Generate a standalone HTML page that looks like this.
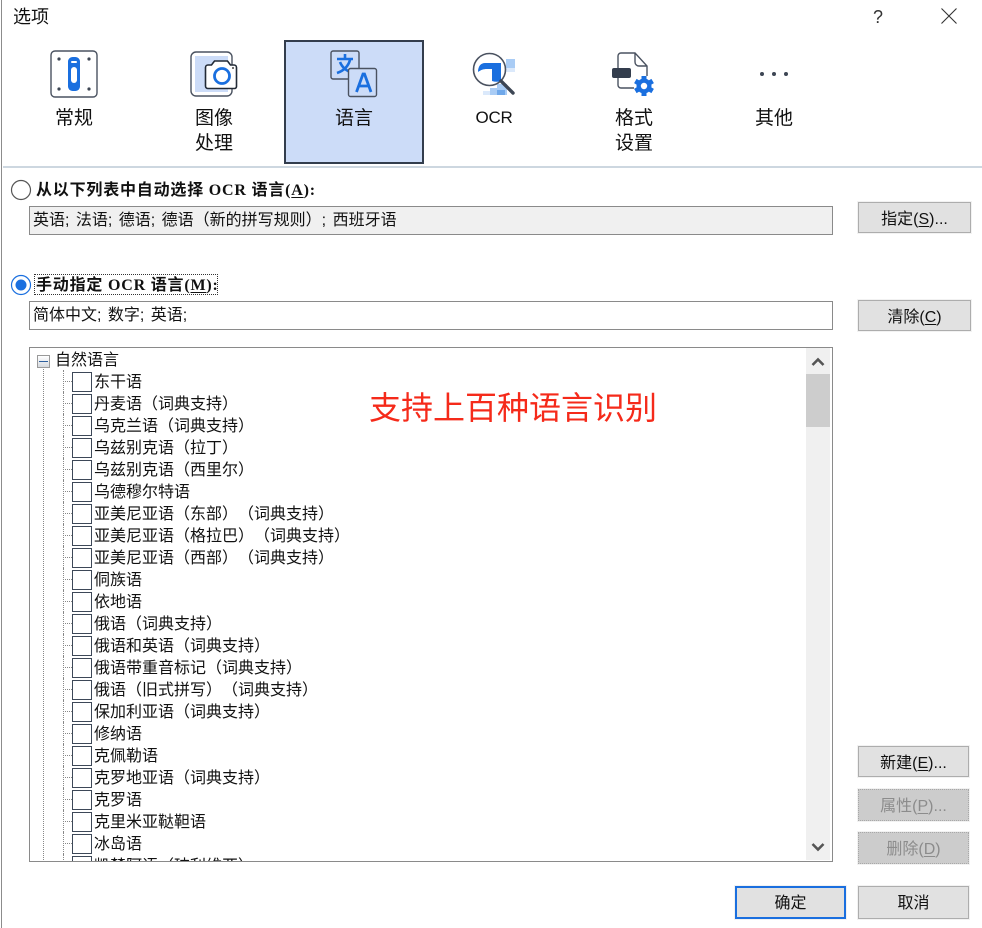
<!DOCTYPE html>
<html lang="zh-CN">
<head>
<meta charset="utf-8">
<title>选项</title>
<style>
html,body{margin:0;padding:0;background:#fff}
body{position:relative;width:982px;height:928px;overflow:hidden;font-family:"Liberation Sans","Noto Sans CJK SC",sans-serif;color:#111;text-spacing-trim:space-all;font-kerning:none}
.a{position:absolute}
.tx{position:absolute;white-space:nowrap;line-height:26px}
.tab{position:absolute;text-align:center;font-size:19px;line-height:25px;width:140px;top:106px}
.box{position:absolute;left:29px;width:799px;border:1px solid #8a8a8a;font-size:16px;font-family:"Liberation Sans","WenQuanYi Zen Hei","Noto Sans CJK SC",sans-serif;line-height:28px;padding-left:3px;box-sizing:content-box;white-space:nowrap;word-spacing:2px}
.btn{position:absolute;box-sizing:border-box;background:#e1e1e1;border:1px solid #adadad;outline:1px solid #f2f2f2;text-align:center;font-size:16px;line-height:33px}
.btn.dis{background:#cccccc;border:1px dotted #a8a8a8;color:#8c8c8c}
.lbl{font-size:16px;font-weight:bold;font-family:'Liberation Serif','Noto Sans CJK SC',sans-serif;letter-spacing:.8px}
u{text-underline-offset:2px}
#tree{position:absolute;left:29px;top:347px;width:804px;height:515px;box-sizing:border-box;border:1px solid #8a8a8a;overflow:hidden;background:#fff}
#rows{position:absolute;left:0;top:2px;width:776px;font-family:"Liberation Sans","WenQuanYi Zen Hei","Noto Sans CJK SC",sans-serif;font-size:16px}
.r{position:relative;height:22px;line-height:22px;padding-left:64px;white-space:nowrap}
.r i{position:absolute;left:42px;top:0;width:20px;height:20px;box-sizing:border-box;border:1px solid #3d4858;background:#fff}
.r b{position:absolute;left:33px;top:9px;width:9px;border-top:1px dotted #888}
.r s{position:absolute;left:33px;top:-2px;height:22px;border-left:1px dotted #888}
</style>
</head>
<body>
<div class="a" style="left:1px;top:0;width:1px;height:928px;background:#8c8c8c"></div>
<div class="tx" style="left:13px;top:4px;font-size:18px">选项</div>
<div class="tx" style="left:873px;top:4px;font-size:18px;color:#333">?</div>
<svg class="a" style="left:940px;top:7px" width="18" height="18" viewBox="0 0 18 18"><path d="M1.500 1.500L16.500 16.500M16.500 1.500L1.500 16.500" stroke="#333" stroke-width="1.100" fill="none"/></svg>

<div class="a" style="left:284px;top:40px;width:140px;height:124px;box-sizing:border-box;background:#ccdcf8;border:2px solid #333d4d"></div>
<div class="a" style="left:3px;top:166px;width:979px;height:2px;background:#cdd7e0"></div>

<svg class="a" style="left:50px;top:50px" width="48" height="48" viewBox="0 0 48 48">
<rect x="1" y="1" width="46" height="46" rx="4" fill="#fff" stroke="#4a5260" stroke-width="1.400"/>
<circle cx="9" cy="9" r="1.600" fill="#3d4654"/><circle cx="39" cy="9" r="1.600" fill="#3d4654"/><circle cx="9" cy="39" r="1.600" fill="#3d4654"/><circle cx="39" cy="39" r="1.600" fill="#3d4654"/>
<rect x="18" y="7" width="12" height="34" rx="4.500" fill="#1a6fdf"/>
<rect x="21" y="11" width="6" height="2" rx="1" fill="#fff"/>
<rect x="21" y="17" width="6" height="16" rx="3" fill="#fff"/>
</svg>

<svg class="a" style="left:189px;top:50px" width="50" height="48" viewBox="0 0 50 48">
<rect x="2" y="2" width="41" height="44" rx="5" fill="#fff" stroke="#4a5260" stroke-width="1.400"/>
<rect x="6" y="6" width="33" height="36" fill="#ccdcf8"/>
<path d="M19 15h3.500l3-4h13l3 4h3.500a2.500 2.500 0 0 1 2.500 2.500v19a2 2 0 0 1-2 2H19a2.500 2.500 0 0 1-2.500-2.500V17.500a2.500 2.500 0 0 1 2.500-2.500z" fill="#fff" stroke="#222a36" stroke-width="1.600"/>
<circle cx="33" cy="26" r="7.500" fill="none" stroke="#1a6fdf" stroke-width="2.800"/>
<circle cx="44" cy="18" r="1" fill="#444"/>
</svg>

<svg class="a" style="left:330px;top:50px" width="48" height="48" viewBox="0 0 48 48">
<rect x="1" y="1" width="28" height="28" rx="2" fill="#ccdcf8" stroke="#4a5260" stroke-width="1.400"/>
<path d="M7 9h16M15 4v5M20 10c-2 7-7 11-13 13M10 12c2 5 6 9 13 11" fill="none" stroke="#1a6fdf" stroke-width="2.600"/>
<rect x="18.500" y="18.500" width="28" height="28" rx="2" fill="#ccdcf8" stroke="#4a5260" stroke-width="1.400"/>
<path d="M26.500 42l6.500-18h1.500l6.500 18M29 36h10" fill="none" stroke="#1a6fdf" stroke-width="2.800"/>
</svg>

<svg class="a" style="left:470px;top:50px" width="48" height="48" viewBox="0 0 48 48">
<g fill="#a9ccf5"><rect x="36" y="9" width="9" height="9"/><rect x="36" y="18" width="9" height="4" fill="#dbe9fb"/><rect x="27" y="34" width="10" height="11"/><rect x="13" y="41" width="7" height="4" fill="#dbe9fb"/><rect x="20" y="38" width="7" height="7" fill="#a9ccf5"/><rect x="27" y="40" width="8" height="5" fill="#6fa8ea"/></g>
<circle cx="19.500" cy="19.500" r="16" fill="#fff" stroke="#4a5260" stroke-width="1.600"/>
<path d="M8 22c0-6 3-9 7-9h16v5h0v13c-3 1-6 1-9 0V19h-5c-4 0-6 1-9 3z" fill="#1a6fdf"/>
<path d="M31 31l12 12" stroke="#3d4654" stroke-width="3.400" stroke-linecap="round"/>
</svg>

<svg class="a" style="left:610px;top:50px" width="48" height="48" viewBox="0 0 48 48">
<path d="M8 18V6a3 3 0 0 1 3-3h14l12 13v10M25 3v9a4 4 0 0 0 4 4h8M8 28v7a3 3 0 0 0 3 3h13" fill="none" stroke="#4a5260" stroke-width="1.400"/>
<rect x="2" y="18" width="19" height="10" rx="2" fill="#333d4d"/>
<g fill="#1a6fdf" transform="translate(34 36)">
<circle r="7.500"/>
<rect x="-2.500" y="-10" width="5" height="20"/>
<rect x="-2.500" y="-10" width="5" height="20" transform="rotate(60)"/>
<rect x="-2.500" y="-10" width="5" height="20" transform="rotate(120)"/>
</g>
<circle cx="34" cy="36" r="3.200" fill="#fff"/>
</svg>

<svg class="a" style="left:759px;top:71px" width="30" height="6" viewBox="0 0 30 6"><circle cx="3" cy="3" r="2" fill="#3d4654"/><circle cx="15" cy="3" r="2" fill="#3d4654"/><circle cx="27" cy="3" r="2" fill="#3d4654"/></svg>

<div class="tab" style="left:4px">常规</div>
<div class="tab" style="left:144px">图像<br>处理</div>
<div class="tab" style="left:284px">语言</div>
<div class="tab" style="left:424px;font-size:17px;letter-spacing:-.3px;top:105px">OCR</div>
<div class="tab" style="left:564px">格式<br>设置</div>
<div class="tab" style="left:704px">其他</div>

<svg class="a" style="left:10px;top:179px" width="22" height="22" viewBox="0 0 22 22"><circle cx="11" cy="11" r="9.500" fill="#fff" stroke="#555" stroke-width="1.200"/></svg>
<div class="tx lbl" style="left:36px;top:178px">从以下列表中自动选择 OCR 语言(<u>A</u>):</div>
<div class="box" style="top:206px;height:27px;background:#f0f0f0">英语; 法语; 德语; 德语（新的拼写规则）; 西班牙语</div>

<svg class="a" style="left:10px;top:274px" width="22" height="22" viewBox="0 0 22 22"><circle cx="11" cy="11" r="9.500" fill="#fff" stroke="#1a6fdf" stroke-width="1.200"/><circle cx="11" cy="11" r="5.500" fill="#1a6fdf"/></svg>
<div class="a" style="left:35px;top:275px;width:182px;height:19px;outline:1px dotted #333"></div>
<div class="tx lbl" style="left:36px;top:273px">手动指定 OCR 语言(<u>M</u>):</div>
<div class="box" style="top:301px;height:27px;background:#fff">简体中文; 数字; 英语;</div>

<div class="btn" style="left:858px;top:202px;width:113px;height:31px">指定(<u>S</u>)...</div>
<div class="btn" style="left:858px;top:300px;width:113px;height:31px">清除(<u>C</u>)</div>

<div id="tree">
<div class="a" style="left:13px;top:18px;height:498px;border-left:1px dotted #888"></div>
<div id="rows">
<div class="r" style="padding-left:25px">自然语言</div>
<div class="r"><s></s><b></b><i></i>东干语</div>
<div class="r"><s></s><b></b><i></i>丹麦语（词典支持）</div>
<div class="r"><s></s><b></b><i></i>乌克兰语（词典支持）</div>
<div class="r"><s></s><b></b><i></i>乌兹别克语（拉丁）</div>
<div class="r"><s></s><b></b><i></i>乌兹别克语（西里尔）</div>
<div class="r"><s></s><b></b><i></i>乌德穆尔特语</div>
<div class="r"><s></s><b></b><i></i>亚美尼亚语（东部）（词典支持）</div>
<div class="r"><s></s><b></b><i></i>亚美尼亚语（格拉巴）（词典支持）</div>
<div class="r"><s></s><b></b><i></i>亚美尼亚语（西部）（词典支持）</div>
<div class="r"><s></s><b></b><i></i>侗族语</div>
<div class="r"><s></s><b></b><i></i>依地语</div>
<div class="r"><s></s><b></b><i></i>俄语（词典支持）</div>
<div class="r"><s></s><b></b><i></i>俄语和英语（词典支持）</div>
<div class="r"><s></s><b></b><i></i>俄语带重音标记（词典支持）</div>
<div class="r"><s></s><b></b><i></i>俄语（旧式拼写）（词典支持）</div>
<div class="r"><s></s><b></b><i></i>保加利亚语（词典支持）</div>
<div class="r"><s></s><b></b><i></i>修纳语</div>
<div class="r"><s></s><b></b><i></i>克佩勒语</div>
<div class="r"><s></s><b></b><i></i>克罗地亚语（词典支持）</div>
<div class="r"><s></s><b></b><i></i>克罗语</div>
<div class="r"><s></s><b></b><i></i>克里米亚鞑靼语</div>
<div class="r"><s></s><b></b><i></i>冰岛语</div>
<div class="r"><s></s><b></b><i></i>凯楚阿语（玻利维亚）</div>
</div>
<div class="a" style="left:7px;top:7px;width:13px;height:13px;box-sizing:border-box;border:1px solid #999;background:linear-gradient(#fff,#d5d9de)"></div>
<div class="a" style="left:9px;top:13px;width:9px;height:1px;background:#2d5f9e"></div>
<div class="a" style="left:776px;top:0;width:24px;height:512px;background:#f0f0f0"></div>
<div class="a" style="left:776px;top:26px;width:24px;height:53px;background:#cdcdcd"></div>
<svg class="a" style="left:781px;top:9px" width="14" height="10" viewBox="0 0 14 10"><path d="M1.500 8L7 2.500 12.500 8" fill="none" stroke="#555" stroke-width="2.600"/></svg>
<svg class="a" style="left:781px;top:494px" width="14" height="10" viewBox="0 0 14 10"><path d="M1.500 2L7 7.500 12.500 2" fill="none" stroke="#555" stroke-width="2.600"/></svg>
</div>

<div class="tx" style="left:369px;top:386px;font-size:32px;line-height:44px;color:#f52a1a;font-weight:400">支持上百种语言识别</div>

<div class="btn" style="left:858px;top:746px;width:111px;height:31px">新建(<u>E</u>)...</div>
<div class="btn dis" style="left:858px;top:789px;width:111px;height:32px">属性(<u>P</u>)...</div>
<div class="btn dis" style="left:858px;top:832px;width:111px;height:32px">删除(<u>D</u>)</div>
<div class="btn" style="left:735px;top:886px;width:111px;height:33px;border:2px solid #1a6fdf;line-height:31px">确定</div>
<div class="btn" style="left:858px;top:886px;width:111px;height:33px">取消</div>
</body>
</html>
